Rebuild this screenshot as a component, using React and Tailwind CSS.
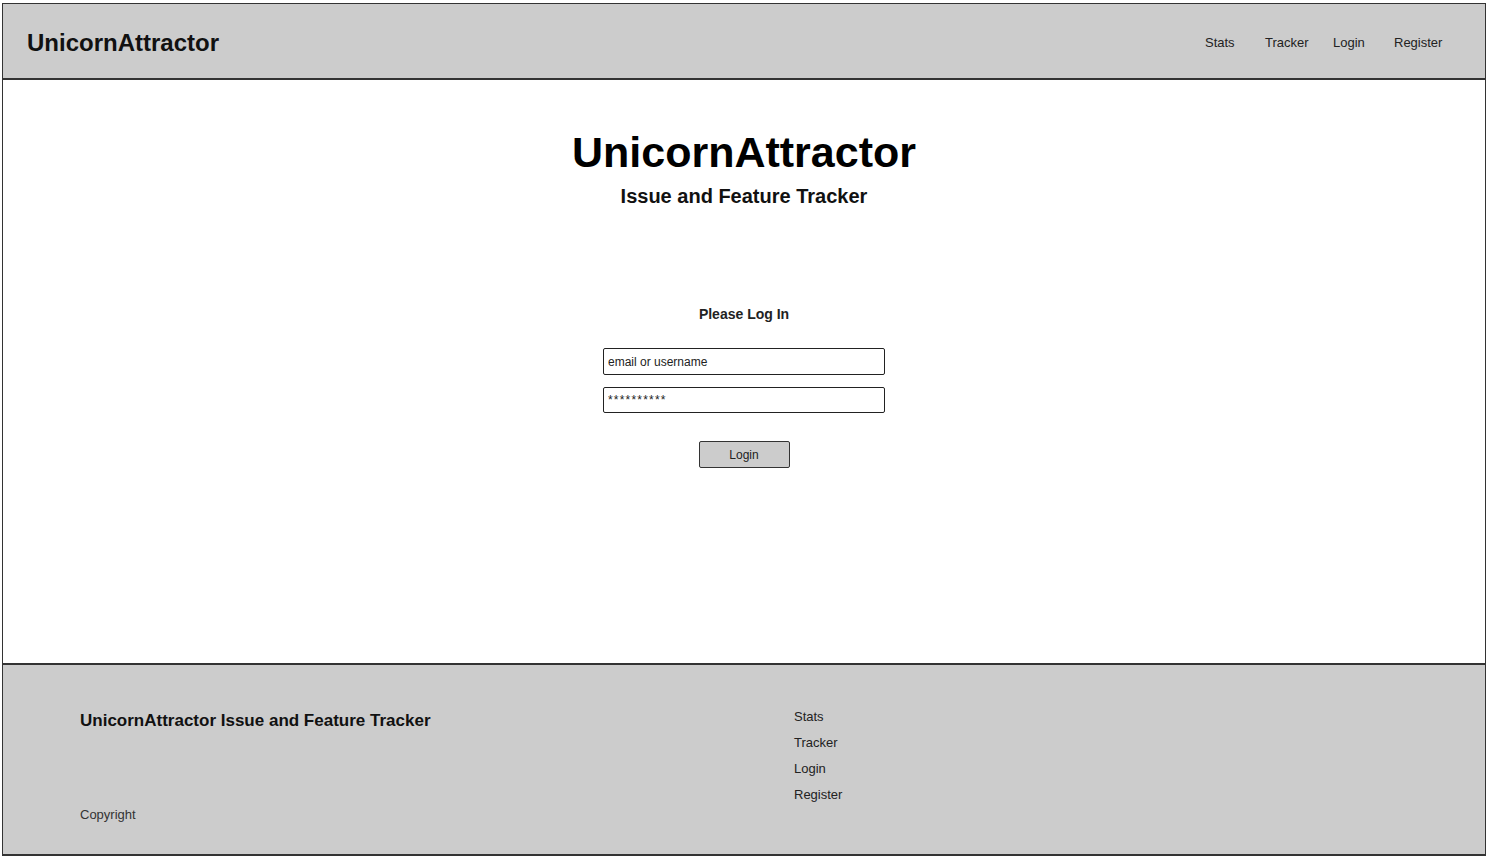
import React from "react";

const sans = "font-['Liberation_Sans',Arial,sans-serif]";
const sketch = "font-['Liberation_Sans',Arial,sans-serif]";

const links = ["Stats", "Tracker", "Login", "Register"];

const Header = () => (
  <header className="h-[77px] bg-[#cccccc] border border-[#333] border-b-2 flex items-center justify-between pt-[3px] pl-[24px] pr-[43px]">
    <h1 className={`${sans} text-[24px] leading-[28px] font-bold text-[#111]`}>UnicornAttractor</h1>
    <nav className={`${sketch} flex items-center text-[13px] text-[#222]`}>
      <a className="w-[60px]">Stats</a>
      <a className="w-[68px]">Tracker</a>
      <a className="w-[61px]">Login</a>
      <a className="w-[48px]">Register</a>
    </nav>
  </header>
);

const LoginForm = () => (
  <main className="h-[583px] bg-white border-x border-[#333] flex flex-col items-center">
    <h2 className={`${sans} mt-[48px] text-[43px] leading-[48px] font-bold text-black`}>UnicornAttractor</h2>
    <h3 className={`${sans} mt-[8px] text-[20px] leading-[24px] font-bold text-[#111]`}>Issue and Feature Tracker</h3>

    <p className={`${sans} mt-[96px] text-[14px] leading-[20px] font-bold text-[#222]`}>Please Log In</p>

    <input
      className={`${sketch} mt-[24px] w-[282px] h-[27px] px-[4px] text-[12px] text-[#222] border border-[#222] rounded-[2px] placeholder:text-[#222] outline-none`}
      placeholder="email or username"
    />
    <input
      className={`${sketch} mt-[12px] w-[282px] h-[26px] px-[4px] text-[12px] tracking-[1.2px] text-[#222] border border-[#222] rounded-[2px] placeholder:text-[#222] outline-none`}
      placeholder="**********"
    />

    <button className={`${sketch} mt-[28px] w-[91px] h-[27px] bg-[#cccccc] border border-[#333] rounded-[2px] text-[12px] text-[#222]`}>
      Login
    </button>
  </main>
);

const Footer = () => (
  <footer className="h-[193px] bg-[#cccccc] border border-[#333] border-t-2 border-b-2 flex pl-[77px]">
    <div className="w-[714px] pt-[46px] flex flex-col">
      <p className={`${sans} text-[17px] leading-[20px] font-bold text-[#111]`}>UnicornAttractor Issue and Feature Tracker</p>
      <p className={`${sans} mt-[74px] text-[13px] leading-[20px] text-[#333]`}>Copyright</p>
    </div>
    <ul className={`${sketch} pt-[39px] flex flex-col text-[13px] leading-[26px] text-[#222]`}>
      {links.map((l) => (
        <li key={l}>{l}</li>
      ))}
    </ul>
  </footer>
);

export default function App() {
  return (
    <div className="min-h-screen bg-white pt-[3px] px-[2px]">
      <Header />
      <LoginForm />
      <Footer />
    </div>
  );
}
